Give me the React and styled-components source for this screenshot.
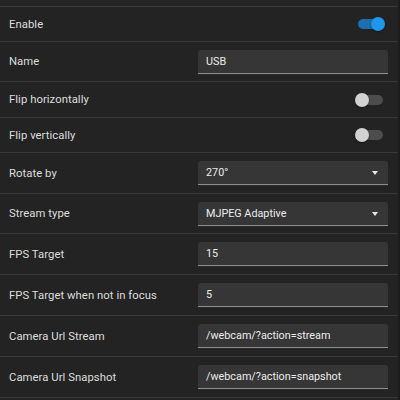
import React from "react";
import styled, { createGlobalStyle } from "styled-components";

const Global = createGlobalStyle`
  html, body { margin: 0; padding: 0; background: #232323; }
  body { font-family: Roboto, "Liberation Sans", Arial, sans-serif; }
`;

const Panel = styled.div`
  width: 400px;
  height: 400px;
  overflow: hidden;
  background: #232323;
  box-sizing: border-box;
  border-right: 2px solid #1c1c1c;
  display: flex;
  flex-direction: column;
`;

const TopStrip = styled.div`
  height: 6px;
  flex: none;
  background: #242424;
  border-bottom: 1px solid #3a3a3a;
`;

const Row = styled.div`
  flex: none;
  height: ${(p) => p.$h}px;
  box-sizing: border-box;
  border-bottom: 1px solid #393939;
  display: grid;
  grid-template-columns: 198px 190px;
  align-items: center;
`;

const Label = styled.div`
  padding-left: 9px;
  font-size: 11.3px;
  color: #dedede;
  letter-spacing: 0.05px;
`;

const Field = styled.div`
  height: 24px;
  box-sizing: border-box;
  background: #363636;
  border-radius: 3px 3px 0 0;
  border-bottom: 1px solid #8d8d8d;
  box-shadow: 0 1px 0 #2a2a2a;
  display: flex;
  align-items: center;
  justify-content: space-between;
  padding: 0 10px 0 8px;
  font-size: 10.8px;
  color: #ececec;
`;

const Caret = styled.span`
  width: 0;
  height: 0;
  border-left: 3.5px solid transparent;
  border-right: 3.5px solid transparent;
  border-top: 4px solid #e6e6e6;
  margin-top: 1px;
`;

const SwitchCell = styled.div`
  display: flex;
  justify-content: flex-end;
  padding-right: ${(p) => (p.$on ? 8 : 5)}px;
`;

const Track = styled.div`
  position: relative;
  width: 22px;
  height: 10px;
  border-radius: 5px;
  background: ${(p) => (p.$on ? "#1d6fae" : "#4d4d4d")};
`;

const Thumb = styled.div`
  position: absolute;
  top: 50%;
  width: 14px;
  height: 14px;
  border-radius: 50%;
  transform: translateY(-50%);
  left: ${(p) => (p.$on ? "13px" : "-6px")};
  background: ${(p) => (p.$on ? "#1e96ee" : "#d2d2d2")};
  box-shadow: 0 1px 2px rgba(0, 0, 0, 0.4);
`;

function Switch({ on }) {
  return (
    <SwitchCell $on={on}>
      <Track $on={on}>
        <Thumb $on={on} />
      </Track>
    </SwitchCell>
  );
}

const rows = [
  { label: "Enable", h: 35, type: "switch", on: true },
  { label: "Name", h: 40, type: "text", value: "USB" },
  { label: "Flip horizontally", h: 36, type: "switch", on: false },
  { label: "Flip vertically", h: 35, type: "switch", on: false },
  { label: "Rotate by", h: 41, type: "select", value: "270°" },
  { label: "Stream type", h: 40, type: "select", value: "MJPEG Adaptive" },
  { label: "FPS Target", h: 41, type: "text", value: "15" },
  { label: "FPS Target when not in focus", h: 41, type: "text", value: "5" },
  { label: "Camera Url Stream", h: 41, type: "text", value: "/webcam/?action=stream" },
  { label: "Camera Url Snapshot", h: 41, type: "text", value: "/webcam/?action=snapshot" },
];

export default function App() {
  return (
    <>
      <Global />
      <Panel>
        <TopStrip />
        {rows.map((r) => (
          <Row key={r.label} $h={r.h}>
            <Label>{r.label}</Label>
            {r.type === "switch" ? (
              <Switch on={r.on} />
            ) : (
              <Field>
                <span>{r.value}</span>
                {r.type === "select" && <Caret />}
              </Field>
            )}
          </Row>
        ))}
      </Panel>
    </>
  );
}
